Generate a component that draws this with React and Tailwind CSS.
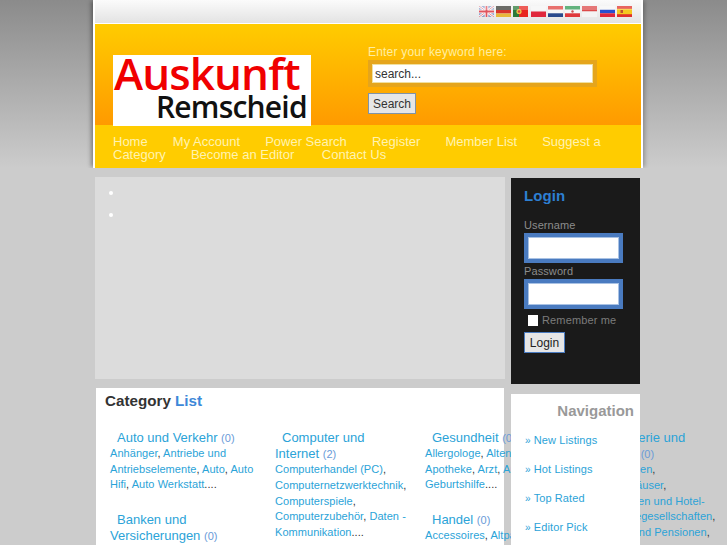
const F = "font-['Liberation_Sans',Arial,sans-serif]";

function Flag({ children }) {
  return (
    <svg width="15" height="11" viewBox="0 0 15 11" className="block">
      {children}
      <rect width="15" height="4" fill="#fff" opacity="0.25" />
    </svg>
  );
}

const flags = [
  <Flag key="uk"><rect width="15" height="11" fill="#8f9fc8" /><path d="M0 0L15 11M15 0L0 11" stroke="#fff" strokeWidth="2.5" /><path d="M0 0L15 11M15 0L0 11" stroke="#e08a96" strokeWidth="1" /><path d="M7.5 0V11M0 5.5H15" stroke="#fff" strokeWidth="3.5" /><path d="M7.5 0V11M0 5.5H15" stroke="#e0555f" strokeWidth="1.8" /></Flag>,
  <Flag key="de"><rect width="15" height="4" fill="#3a3a34" /><rect y="4" width="15" height="3.5" fill="#d8352a" /><rect y="7.5" width="15" height="3.5" fill="#e8b83a" /></Flag>,
  <Flag key="pt"><rect width="15" height="11" fill="#e8261f" /><rect width="6" height="11" fill="#2c7a3a" /><circle cx="6" cy="5.5" r="2.6" fill="#e9c64a" /><circle cx="6" cy="5.5" r="1.2" fill="#d9433a" /></Flag>,
  <Flag key="pl"><rect width="15" height="5.5" fill="#f4f4f4" /><rect y="5.5" width="15" height="5.5" fill="#e0283c" /></Flag>,
  <Flag key="nl"><rect width="15" height="3.7" fill="#e0403c" /><rect y="3.7" width="15" height="3.6" fill="#f6f6f6" /><rect y="7.3" width="15" height="3.7" fill="#2a4a8c" /></Flag>,
  <Flag key="ir"><rect width="15" height="3.7" fill="#2f9a52" /><rect y="3.7" width="15" height="3.6" fill="#f6f6f6" /><rect y="7.3" width="15" height="3.7" fill="#e0393c" /><circle cx="7.5" cy="5.5" r="1.2" fill="#d05050" /></Flag>,
  <Flag key="id"><rect width="15" height="5.5" fill="#dc4a4a" /><rect y="5.5" width="15" height="5.5" fill="#f4f4f4" /></Flag>,
  <Flag key="ru"><rect width="15" height="3.7" fill="#f6f6f6" /><rect y="3.7" width="15" height="3.6" fill="#2a4fd0" /><rect y="7.3" width="15" height="3.7" fill="#e0283c" /></Flag>,
  <Flag key="es"><rect width="15" height="11" fill="#e0302c" /><rect y="2.8" width="15" height="5.4" fill="#f4c820" /><rect x="3.5" y="4" width="2.5" height="3" fill="#c05030" /></Flag>,
];

function Links({ items, tail = "...." }) {
  return (
    <div className="text-[11px] leading-[15.6px] tracking-[0.05px] text-[#333]">
      {items.map((t, i) => (
        <span key={t}>
          <a className="text-[#2ba3d8]">{t}</a>
          {i < items.length - 1 ? ", " : tail}
        </span>
      ))}
    </div>
  );
}

function Cat({ title, count, items, tail }) {
  return (
    <div className="mb-[19px]">
      <div className="text-[13px] leading-[16.2px] indent-[7px] text-[#2ba3d8]">
        {title} <span className="text-[11px] text-[#6a9bd8]">({count})</span>
      </div>
      <Links items={items} tail={tail} />
    </div>
  );
}

function Field({ label }) {
  return (
    <>
      <div className="text-[11px] leading-[16px] tracking-[0.1px] text-[#8c8c8c]">{label}</div>
      <div className="w-[99px] h-[30px] border-[4px] border-[#4a7bc0] bg-white outline-1 -outline-offset-5 outline-[#a9c2e4]" />
    </>
  );
}

export default function App() {
  return (
    <div className={`${F} h-[545px] overflow-hidden bg-[#cccccc] bg-[linear-gradient(#8b8b8b,#cccccc_168px)] bg-no-repeat`}>
      <header className="ml-[93px] w-[550px] h-[168px] bg-white px-[2px] shadow-[-3px_0_4px_-1px_rgba(0,0,0,0.35),3px_0_4px_-1px_rgba(0,0,0,0.25)] [clip-path:inset(0_-10px)]">
        <div className="h-[23px] bg-[linear-gradient(#fbfbfb,#e3e3e3)] flex justify-end items-start pt-[6px] pr-[9px] gap-[2.3px]">
          {flags}
        </div>
        <div className="mt-[1px] h-[101px] bg-[linear-gradient(#ffcc00,#ff9a00)] flex">
          <div className="relative z-10 ml-[18px] mt-[31px] w-[198px] h-[71px] bg-white flex flex-col font-['Open_Sans',sans-serif] font-semibold">
            <div className="text-[#f00000] text-[44px] leading-[35px] h-[36px] tracking-[-0.9px] pl-[1px] pt-[1px] whitespace-nowrap">Auskunft</div>
            <div className="text-[#111] text-[30px] leading-[32px] tracking-[-0.8px] pl-[43px] whitespace-nowrap">Remscheid</div>
          </div>
          <div className="ml-[57px] mt-[21px] flex flex-col items-start">
            <div className="text-[12px] leading-[14px] tracking-[0.2px] text-[#ffeea0]">Enter your keyword here:</div>
            <div className="mt-[1px] w-[229px] h-[27px] bg-[#e5a51c] p-[4px]">
              <div className="w-[221px] h-[19px] bg-white border border-[#f0e0a0] text-[12px] leading-[18px] px-[2px] text-[#333]">search...</div>
            </div>
            <button className="mt-[6px] w-[48px] h-[21px] bg-[#e6e6e6] border border-[#7f93a8] text-[12px] text-[#333] leading-none">Search</button>
          </div>
        </div>
        <nav className="relative h-[43px] bg-[#ffcc00] pl-[18px] pr-[30px] pt-[10px] text-[13px] leading-[13px] text-[#fff3b0]">
          <a className="mr-[21.5px]">Home</a> <a className="mr-[21.5px]">My Account</a> <a className="mr-[21.5px]">Power Search</a> <a className="mr-[21.5px]">Register</a> <a className="mr-[21.5px]">Member List</a> <a className="mr-[21.5px]">Suggest a Category</a> <a className="mr-[24px]">Become an Editor</a> <a>Contact Us</a>
        </nav>
      </header>

      <main className="ml-[95px] mt-[9px] flex gap-[6px] items-start">
        <div className="w-[410px] shrink-0">
          <div className="h-[202px] bg-[#dcdcdc] pt-[4px]">
            <ul className="list-disc text-white pl-[29px] text-[14px] leading-[22px]">
              <li>&nbsp;</li>
              <li>&nbsp;</li>
            </ul>
          </div>
          <section className="mt-[9px] ml-[1px] w-[408px] bg-white pt-[4px] pl-[9px] h-[200px]">
            <h2 className="text-[15.2px] leading-[18px] font-bold text-[#333]">Category <span className="text-[#3d88d8]">List</span></h2>
            <div className="mt-[20px] ml-[5px] w-[640px] grid grid-cols-[165px_150px_173px_124px] items-start">
              <div className="pr-[14px]">
                <Cat title="Auto und Verkehr" count="0" items={["Anhänger", "Antriebe und Antriebselemente", "Auto", "Auto Hifi", "Auto Werkstatt"]} />
                <Cat title="Banken und Versicherungen" count="0" items={["Bausparen", "Versicherung"]} />
              </div>
              <div className="pr-[16px]">
                <Cat title="Computer und Internet" count="2" items={["Computerhandel (PC)", "Computernetzwerktechnik", "Computerspiele", "Computerzubehör", "Daten - Kommunikation"]} />
              </div>
              <div className="pr-[25px]">
                <Cat title="Gesundheit" count="0" items={["Allergologe", "Altenpflege", "Apotheke", "Arzt", "Augenarzt", "Geburtshilfe"]} />
                <Cat title="Handel" count="0" items={["Accessoires", "Altpapier"]} />
              </div>
              <div>
                <div className="text-[13px] leading-[16.2px] indent-[7px] text-[#2ba3d8]">
                  Hotellerie und Gastro <span className="text-[11px] text-[#6a9bd8]">(0)</span>
                </div>
                <div className="text-[11px] leading-[15.6px] tracking-[0.05px] text-[#2ba3d8] whitespace-nowrap">
                  <div>Brauereien<span className="text-[#333]">,</span></div>
                  <div>Kaffeehäuser<span className="text-[#333]">,</span></div>
                  <div>Pensionen und Hotel-</div>
                  <div>Busreisegesellschaften<span className="text-[#333]">,</span></div>
                  <div>Hotels und Pensionen<span className="text-[#333]">,</span></div>
                </div>
              </div>
            </div>
          </section>
        </div>

        <aside className="relative z-10 w-[129px] shrink-0 mt-[1px]">
          <div className="h-[206px] bg-[#1a1a1a] pl-[13px] pt-[9px]">
            <h3 className="text-[15px] leading-[18px] font-bold tracking-[0.1px] text-[#2d7fd2]">Login</h3>
            <div className="mt-[12px]"><Field label="Username" /></div>
            <Field label="Password" />
            <div className="flex items-center mt-[4px] ml-[4px] gap-[4px]">
              <div className="w-[10px] h-[11px] bg-white" />
              <span className="text-[11px] leading-[14px] tracking-[0.15px] text-[#7c7c7c]">Remember me</span>
            </div>
            <button className="block mt-[5px] w-[41px] h-[21px] bg-[#e6e6e6] border border-[#4a7bc0] text-[12px] text-[#222] leading-none">Login</button>
          </div>
          <div className="mt-[10px] h-[200px] bg-white pt-[8px] pr-[6px] pl-[14px]">
            <h3 className="text-right text-[15px] leading-[18px] font-bold text-[#999]">Navigation</h3>
            <ul className="mt-[6px] text-[11px] leading-[29px] tracking-[0.1px] text-[#2ba3d8]">
              <li><span className="text-[10px]">»</span> New Listings</li>
              <li><span className="text-[10px]">»</span> Hot Listings</li>
              <li><span className="text-[10px]">»</span> Top Rated</li>
              <li><span className="text-[10px]">»</span> Editor Pick</li>
            </ul>
          </div>
        </aside>
      </main>
    </div>
  );
}
